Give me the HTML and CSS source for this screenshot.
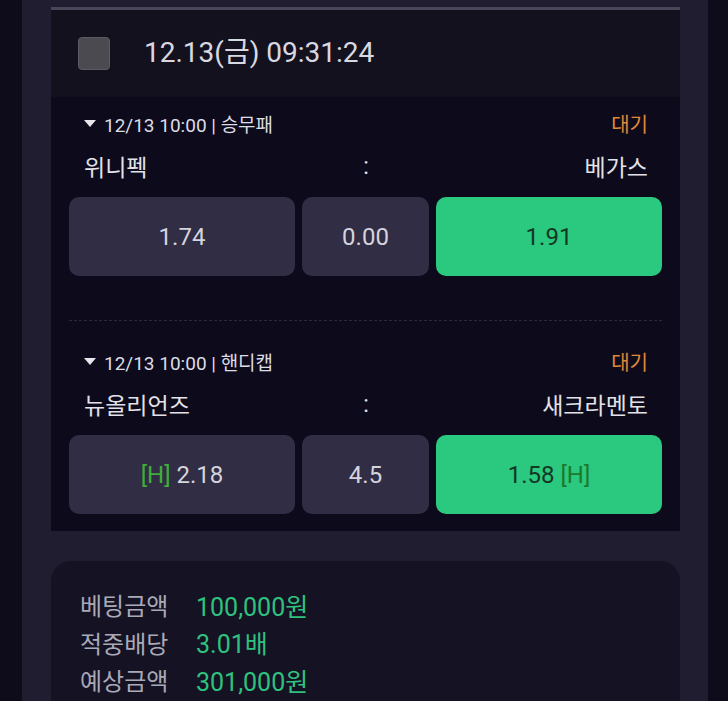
FILE: index.html
```html
<!DOCTYPE html>
<html lang="ko">
<head>
  <meta charset="UTF-8">
  <meta name="viewport" content="width=device-width, initial-scale=1.0">
  <title>Bet Slip</title>
  <link rel="stylesheet" href="styles.css">
</head>
<body>

  <div class="panel">
    <div class="top-line"></div>

    <div class="slip-head">
      <span class="check"></span>
      <span class="slip-date">12.13(금) 09:31:24</span>
    </div>

    <div class="match-card">
      <div class="match">
        <div class="meta">
          <span class="meta-left"><span class="caret"></span>12/13 10:00 | 승무패</span>
          <span class="status">대기</span>
        </div>
        <div class="teams">
          <span>위니펙</span>
          <span class="colon">:</span>
          <span class="away">베가스</span>
        </div>
        <div class="odds">
          <div class="odd">1.74</div>
          <div class="odd mid">0.00</div>
          <div class="odd picked">1.91</div>
        </div>
      </div>

      <div class="match">
        <div class="meta">
          <span class="meta-left"><span class="caret"></span>12/13 10:00 | 핸디캡</span>
          <span class="status">대기</span>
        </div>
        <div class="teams">
          <span>뉴올리언즈</span>
          <span class="colon">:</span>
          <span class="away">새크라멘토</span>
        </div>
        <div class="odds">
          <div class="odd"><span class="h">[H]</span>&nbsp;2.18</div>
          <div class="odd mid">4.5</div>
          <div class="odd picked">1.58&nbsp;<span class="h">[H]</span></div>
        </div>
      </div>
    </div>

    <div class="summary">
      <div class="sum-row"><span class="sum-label">베팅금액</span><span class="sum-value">100,000원</span></div>
      <div class="sum-row"><span class="sum-label">적중배당</span><span class="sum-value">3.01배</span></div>
      <div class="sum-row"><span class="sum-label">예상금액</span><span class="sum-value">301,000원</span></div>
    </div>
  </div>

</body>
</html>
```

FILE: styles.css
```css
body {
  margin: 0;
  padding: 0;
  background-color: #0e0b1a;
  font-family: Roboto, "Noto Sans CJK KR", sans-serif;
  color: #dcdce4;
  height: 701px;
  overflow: hidden;
}

.panel {
  margin: 0 20px 0 22px;
  padding: 7px 28px 40px 29px;
  background-color: #1f1d2f;
  min-height: 701px;
  box-sizing: border-box;
}

.top-line {
  height: 3px;
  background-color: #4a4659;
}

/* header with checkbox and date */
.slip-head {
  height: 87px;
  background-color: #14111f;
  display: flex;
  align-items: center;
  padding-left: 27px;
}

.check {
  width: 30px;
  height: 31px;
  border: 1px solid #5c5a62;
  border-radius: 4px;
  background-color: #4c4a51;
}

.slip-date {
  margin-left: 34px;
  font-size: 28px;
  color: #d8d8e0;
  line-height: 32px;
  margin-top: -1px;
}

/* matches */
.match-card {
  background-color: #0d0a1b;
  padding: 13px 18px 17px;
}

.match + .match {
  border-top: 1px dashed #2c2a3a;
  margin-top: 44px;
  padding-top: 27px;
}

.meta {
  display: flex;
  justify-content: space-between;
  align-items: center;
  padding: 0 14px 0 15px;
  height: 26px;
  font-size: 19px;
}

.meta-left {
  display: flex;
  align-items: center;
}

.caret {
  width: 0;
  height: 0;
  border-left: 6px solid transparent;
  border-right: 6px solid transparent;
  border-top: 7px solid #e6e6ec;
  margin-right: 8px;
}

.status {
  color: #e0883a;
  font-size: 20px;
}

.teams {
  display: grid;
  grid-template-columns: 1fr auto 1fr;
  align-items: center;
  margin-top: 13px;
  padding: 0 14px 0 15px;
  height: 30px;
  font-size: 23px;
  color: #e2e2e8;
}

.colon {
  text-align: center;
}

.away {
  text-align: right;
}

.odds {
  display: flex;
  gap: 7px;
  margin-top: 18px;
}

.odd {
  flex: 0 0 226px;
  height: 79px;
  border-radius: 10px;
  background-color: #312d44;
  display: flex;
  justify-content: center;
  align-items: center;
  font-size: 24px;
  color: #d4d4dc;
}

.odd.mid {
  flex: 1;
}

.odd .h {
  color: #3fae3a;
}

.odd.picked {
  background-color: #2bc87f;
  color: #143823;
}

.odd.picked .h {
  color: #1c7a2c;
}

/* summary */
.summary {
  margin-top: 30px;
  background-color: #151223;
  border-radius: 20px;
  padding: 25px 29px 30px;
}

.sum-row {
  display: flex;
  align-items: center;
  height: 37.5px;
  font-size: 24px;
}

.sum-label {
  width: 116px;
  color: #a9a9b8;
}

.sum-value {
  color: #2ec27e;
  font-size: 25px;
}
```
